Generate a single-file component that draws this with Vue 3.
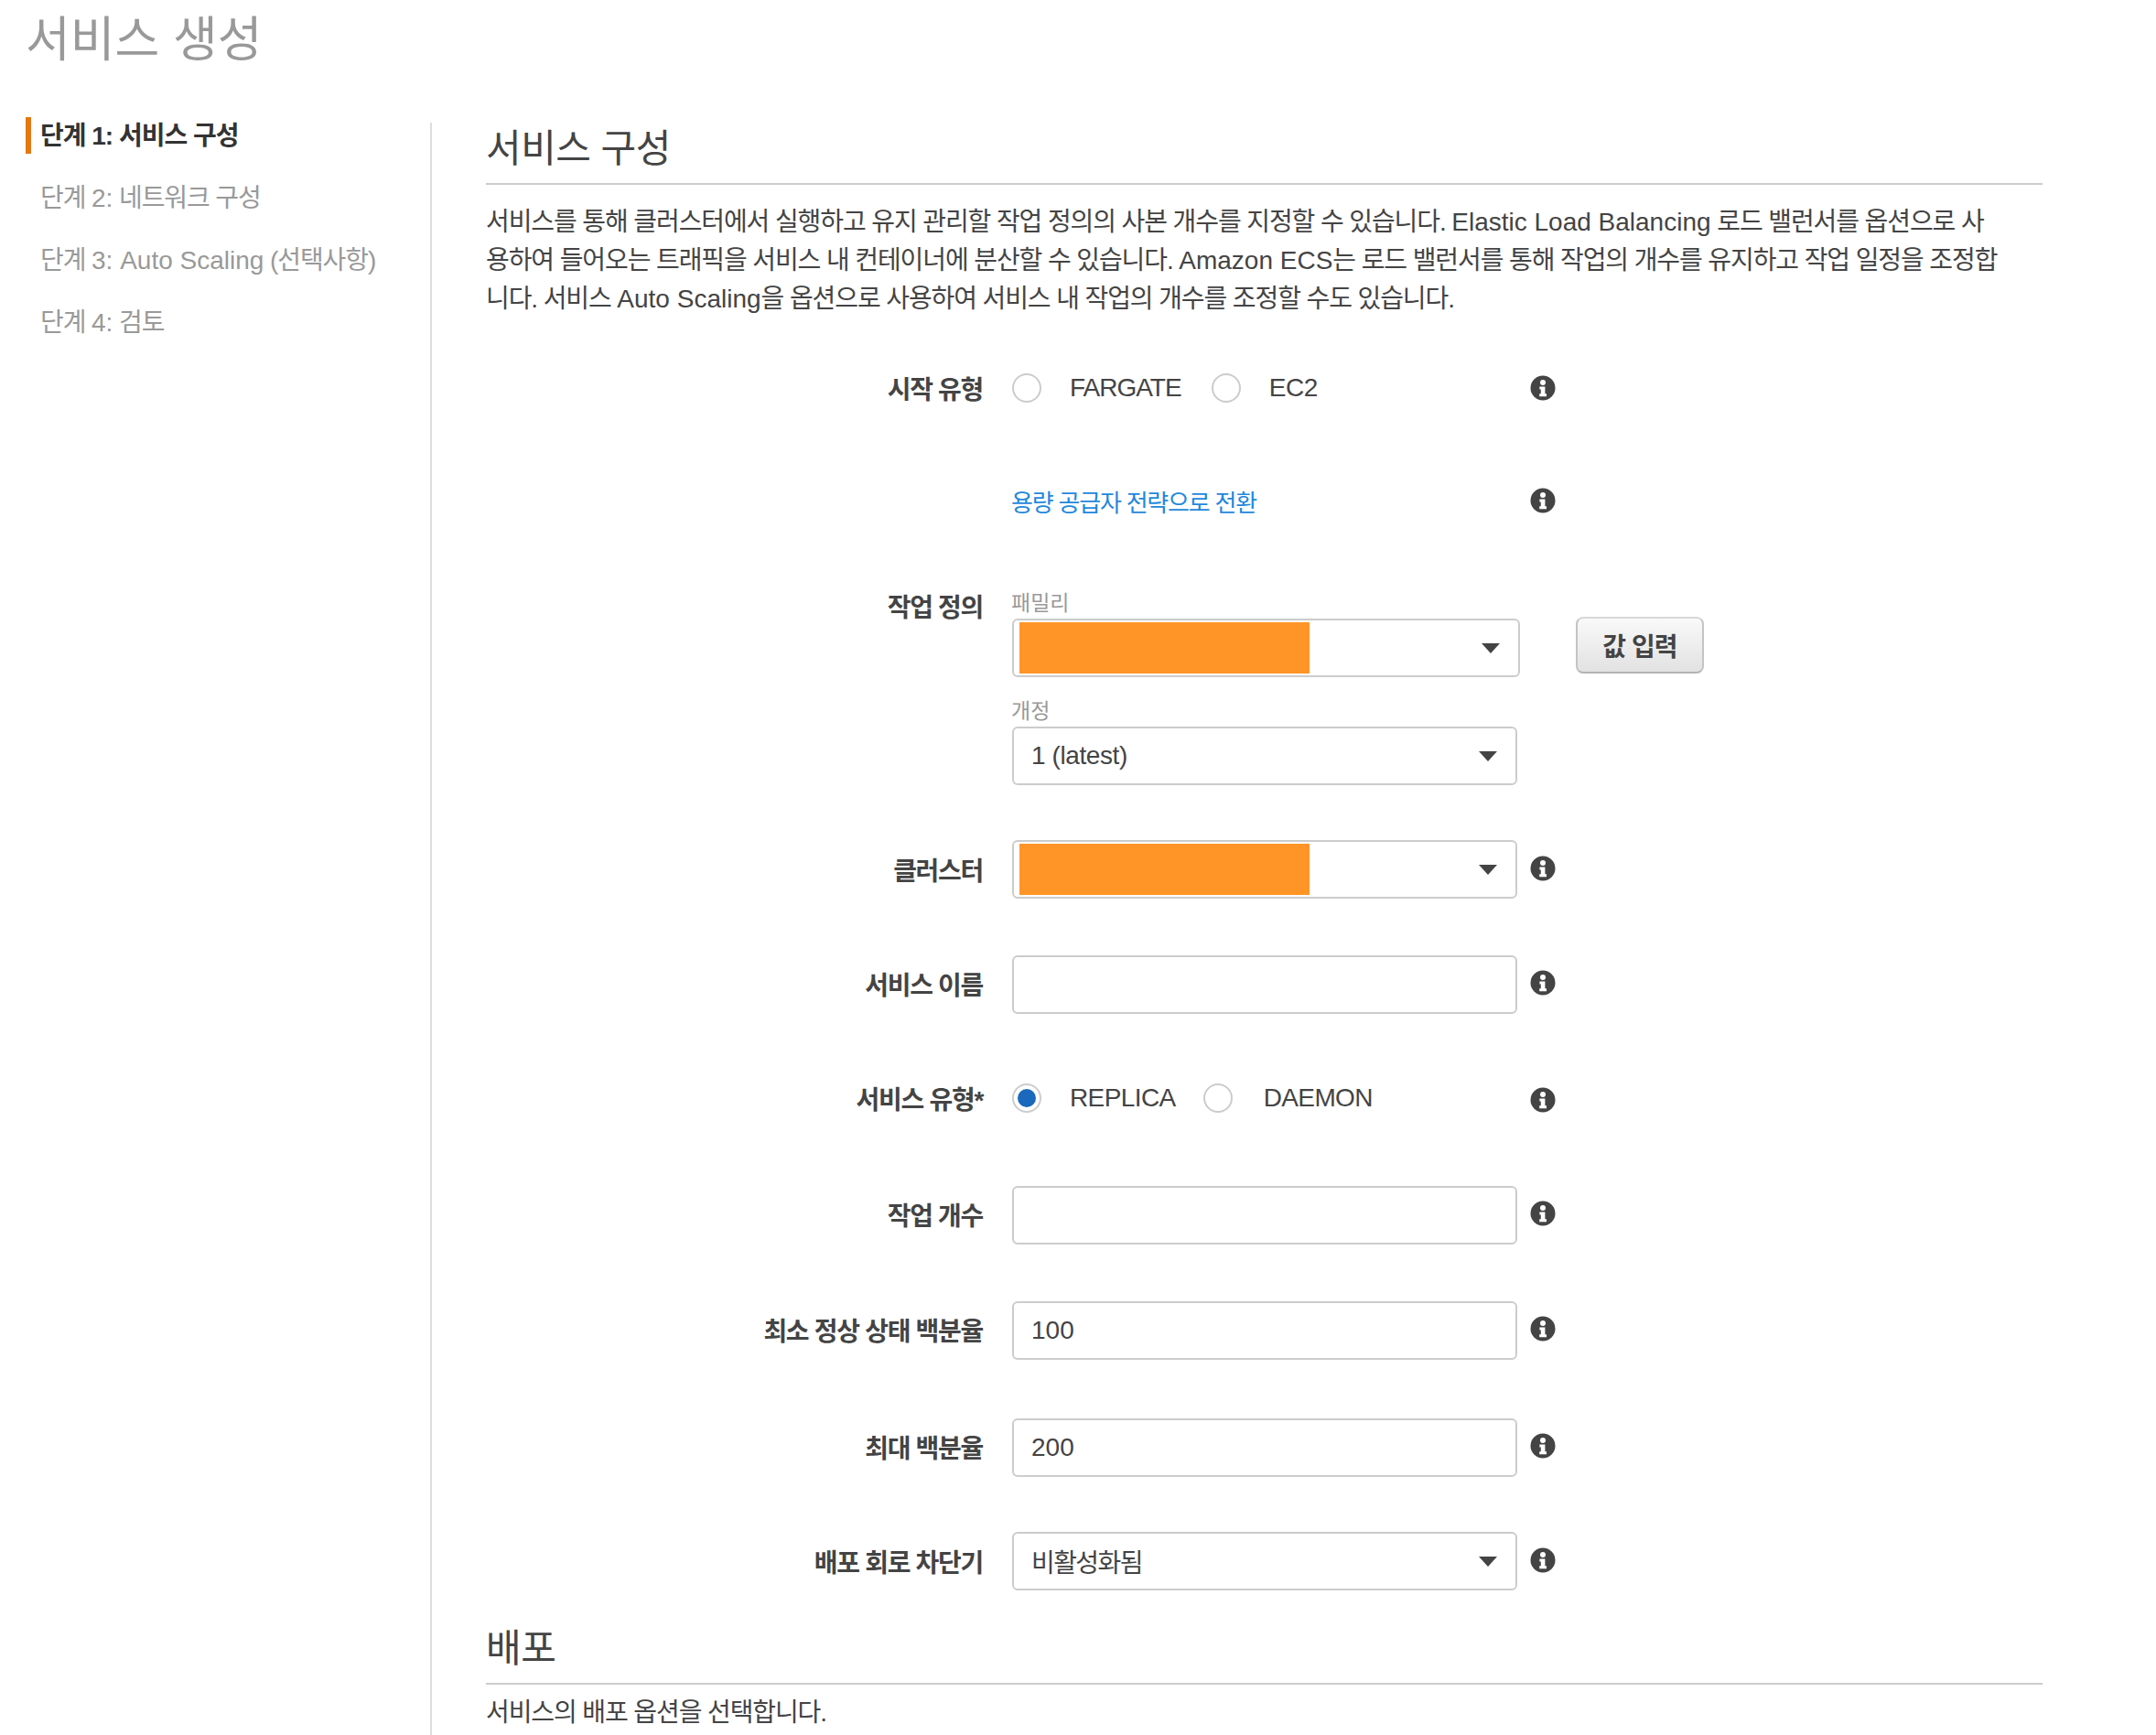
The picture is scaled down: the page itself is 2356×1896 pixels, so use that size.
<template>
  <div class="page">
    <h1 class="title">서비스 생성</h1>
    <div class="layout">
      <ul class="steps">
        <li class="active">단계 1: 서비스 구성</li>
        <li>단계 <span class="en">2:</span> 네트워크 구성</li>
        <li>단계 <span class="en">3: Auto Scaling</span> (선택사항)</li>
        <li>단계 <span class="en">4:</span> 검토</li>
      </ul>
      <div class="main">
        <h2 class="section">서비스 구성</h2>
        <p class="desc">서비스를 통해 클러스터에서 실행하고 유지 관리할 작업 정의의 사본 개수를 지정할 수 있습니다. <span class="en">Elastic Load Balancing</span> 로드 밸런서를 옵션으로 사용하여 들어오는 트래픽을 서비스 내 컨테이너에 분산할 수 있습니다. <span class="en">Amazon ECS</span>는 로드 밸런서를 통해 작업의 개수를 유지하고 작업 일정을 조정합니다. 서비스 <span class="en">Auto Scaling</span>을 옵션으로 사용하여 서비스 내 작업의 개수를 조정할 수도 있습니다.</p>

        <div class="row r-launch">
          <label>시작 유형</label>
          <div class="radios">
            <span class="radio"></span><span class="radio-text tight">FARGATE</span>
            <span class="radio"></span><span class="radio-text">EC2</span>
          </div>
          <svg class="info flat" viewBox="0 0 28 28"><use href="#info-i" /></svg>
        </div>

        <div class="row r-link">
          <label></label>
          <a class="link">용량 공급자 전략으로 전환</a>
          <svg class="info flat" viewBox="0 0 28 28"><use href="#info-i" /></svg>
        </div>

        <div class="row r-task">
          <label class="top">작업 정의</label>
          <div>
            <div class="sub">패밀리</div>
            <div class="select wide"><span class="mask"></span><i class="arrow"></i></div>
            <div class="sub second">개정</div>
            <div class="select"><span class="latin">1 (latest)</span><i class="arrow"></i></div>
          </div>
          <button class="enter">값 입력</button>
        </div>

        <div class="row r-cluster">
          <label>클러스터</label>
          <div class="select"><span class="mask"></span><i class="arrow"></i></div>
          <svg class="info low" viewBox="0 0 28 28"><use href="#info-i" /></svg>
        </div>

        <div class="row r-name">
          <label class="raised">서비스 이름</label>
          <input class="field" type="text" />
          <svg class="info" viewBox="0 0 28 28"><use href="#info-i" /></svg>
        </div>

        <div class="row r-type">
          <label>서비스 유형*</label>
          <div class="radios">
            <span class="radio on"></span><span class="radio-text">REPLICA</span>
            <span class="radio"></span><span class="radio-text">DAEMON</span>
          </div>
          <svg class="info flat" viewBox="0 0 28 28"><use href="#info-i" /></svg>
        </div>

        <div class="row r-count">
          <label class="raised">작업 개수</label>
          <input class="field" type="text" />
          <svg class="info" viewBox="0 0 28 28"><use href="#info-i" /></svg>
        </div>

        <div class="row r-min">
          <label class="raised">최소 정상 상태 백분율</label>
          <input class="field" type="text" value="100" />
          <svg class="info" viewBox="0 0 28 28"><use href="#info-i" /></svg>
        </div>

        <div class="row r-max">
          <label class="raised">최대 백분율</label>
          <input class="field" type="text" value="200" />
          <svg class="info" viewBox="0 0 28 28"><use href="#info-i" /></svg>
        </div>

        <div class="row r-breaker">
          <label>배포 회로 차단기</label>
          <div class="select"><span class="ko">비활성화됨</span><i class="arrow"></i></div>
          <svg class="info low" viewBox="0 0 28 28"><use href="#info-i" /></svg>
        </div>

        <h2 class="section deploy">배포</h2>
        <p class="desc deploy-text">서비스의 배포 옵션을 선택합니다.</p>
      </div>
    </div>

    <svg class="defs" width="0" height="0">
      <symbol id="info-i" viewBox="0 0 28 28">
        <circle cx="14" cy="14" r="13.5" fill="#444" />
        <circle cx="14" cy="8" r="3" fill="#fff" />
        <path d="M10.4 12.4h6v7.8h1.6v3h-7.8v-3h1.6v-4.8h-1.4z" fill="#fff" />
      </symbol>
    </svg>
  </div>
</template>

<script setup>
</script>

<style>
html, body {
  margin: 0;
  background: #fff;
}
</style>

<style scoped>
.page {
  height: 1896px;
  overflow: hidden;
  font-family: "Liberation Sans", "Noto Sans CJK KR", sans-serif;
  font-size: 28px;
  color: #444;
}

.en {
  letter-spacing: 0;
}

.title {
  margin: 0;
  padding: 13px 0 0 28px;
  height: 128px;
  box-sizing: border-box;
  font-size: 53px;
  line-height: 62px;
  font-weight: 400;
  color: #999;
}

.layout {
  display: flex;
}

.steps {
  width: 442px;
  margin: 0 0 0 28px;
  padding: 0;
  list-style: none;
  flex-shrink: 0;
  letter-spacing: -1.1px;
}

.steps li {
  height: 40px;
  margin-bottom: 28px;
  padding-left: 16px;
  line-height: 42px;
  color: #999;
}

.steps li.active {
  border-left: 6px solid #e47911;
  padding-left: 10px;
  font-weight: 700;
  letter-spacing: -1px;
  color: #333;
}

.main {
  flex: 1;
  margin-top: 6px;
  padding: 0 124px 0 59px;
  border-left: 2px solid #ddd;
  height: 1762px;
}

.section {
  margin: 0;
  padding: 5px 0 13px;
  border-bottom: 2px solid #ccc;
  font-size: 42px;
  line-height: 48px;
  font-weight: 400;
  letter-spacing: -0.5px;
  color: #444;
}

.section.deploy {
  margin-top: 35px;
}

.desc {
  max-width: 1656px;
  margin: 20px 0 0;
  line-height: 42px;
  letter-spacing: -1.1px;
}

.desc.deploy-text {
  margin-top: 10px;
}

.row {
  display: grid;
  grid-template-columns: 575px 566px auto;
  align-items: center;
  align-content: center;
}

.row label {
  padding-right: 32px;
  text-align: right;
  font-weight: 700;
  letter-spacing: -1.3px;
}

.row label.top {
  align-self: start;
  margin-top: 2px;
}

.row label.raised {
  margin-bottom: 2px;
}

.r-launch { margin-top: 60px; height: 32px; }
.r-link { margin-top: 86px; height: 42px; }
.r-task { margin-top: 72px; align-items: start; }
.r-cluster { margin-top: 60px; }
.r-name { margin-top: 62px; }
.r-type { margin-top: 76px; height: 32px; }
.r-count { margin-top: 80px; }
.r-min { margin-top: 62px; }
.r-max { margin-top: 64px; }
.r-breaker { margin-top: 60px; }

.radios {
  display: flex;
  align-items: center;
  height: 32px;
}

.radio {
  width: 32px;
  height: 32px;
  box-sizing: border-box;
  border: 2px solid #ccc;
  border-radius: 50%;
  flex-shrink: 0;
}

.radio.on {
  background: #1a69bd;
  background-clip: content-box;
  padding: 4px;
}

.radio-text {
  margin: 0 33px 0 31px;
  letter-spacing: -0.4px;
}

.radio-text.tight {
  letter-spacing: -1px;
}

.r-type .radio-text {
  margin-right: 30px;
  letter-spacing: -0.6px;
}

.r-type .radio-text:last-child {
  margin-left: 34px;
}

.r-type .info {
  margin-top: 3px;
}

.link {
  margin-left: -1px;
  font-size: 26px;
  letter-spacing: -1.2px;
  color: #1f88dc;
  cursor: pointer;
}

.sub {
  height: 36px;
  margin-left: -1px;
  font-size: 23px;
  line-height: 38px;
  color: #999;
}

.sub.second {
  margin-top: 18px;
}

.select,
.field {
  display: flex;
  align-items: center;
  justify-content: space-between;
  width: 552px;
  height: 64px;
  box-sizing: border-box;
  padding: 0 19px;
  border: 2px solid #ccc;
  border-radius: 6px;
  background: #fff;
  font-family: inherit;
  font-size: 28px;
  color: #444;
  outline: none;
}

.select.wide {
  width: 555px;
}

.select .latin {
  letter-spacing: -0.4px;
}

.select .ko {
  letter-spacing: -1.6px;
}

.mask {
  width: 317px;
  height: 56px;
  margin-left: -13px;
  background: #ff9526;
}

.arrow {
  width: 0;
  height: 0;
  margin-right: 1px;
  border-left: 10px solid transparent;
  border-right: 10px solid transparent;
  border-top: 11px solid #444;
}

.info {
  width: 28px;
  height: 28px;
  margin-bottom: 4px;
}

.info.low {
  margin-bottom: 2px;
}

.info.flat {
  margin-bottom: 0;
}

.enter {
  justify-self: start;
  width: 140px;
  height: 62px;
  margin: 34px 0 0 50px;
  padding: 0;
  border: 2px solid #c4c4c4;
  border-top-color: #d8d8d8;
  border-bottom-color: #b4b4b4;
  border-radius: 8px;
  background: linear-gradient(#f9f9f9, #e2e2e2);
  font-family: inherit;
  font-size: 28px;
  font-weight: 700;
  letter-spacing: -0.9px;
  color: #444;
}

.defs {
  position: absolute;
}
</style>
